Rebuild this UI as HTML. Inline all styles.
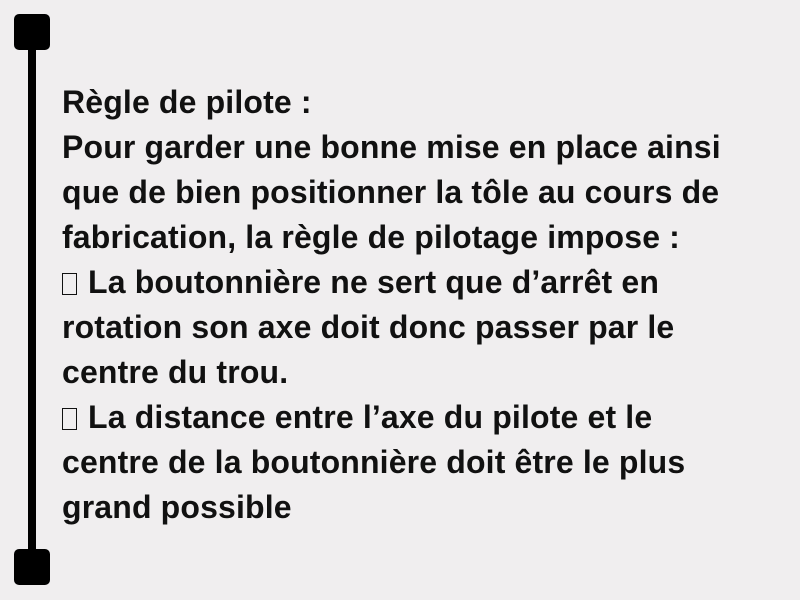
<!DOCTYPE html>
<html><head><meta charset="utf-8"><style>
html,body{margin:0;padding:0}
body{width:800px;height:600px;background:#f0eeef;position:relative;overflow:hidden}
.bar{position:absolute;left:28px;top:30px;width:8px;height:540px;background:#000}
.sq{position:absolute;left:14px;width:36px;height:36px;background:#000;border-radius:5px}
.t{position:absolute;left:62px;top:80px;font-family:"Liberation Sans",sans-serif;font-weight:bold;font-size:32px;line-height:45px;color:#111;white-space:nowrap;letter-spacing:0.15px}
.b{display:inline-block;width:15px;height:22px;border:1.5px solid #111;box-sizing:border-box;vertical-align:-2px;margin-right:2px}
</style></head><body>
<div class="bar"></div>
<div class="sq" style="top:14px"></div>
<div class="sq" style="top:549px"></div>
<div class="t">Règle de pilote :<br>
Pour garder une bonne mise en place ainsi<br>
que de bien positionner la tôle au cours de<br>
fabrication, la règle de pilotage impose :<br>
<span class="b"></span> La boutonnière ne sert que d’arrêt en<br>
rotation son axe doit donc passer par le<br>
centre du trou.<br>
<span class="b"></span> La distance entre l’axe du pilote et le<br>
centre de la boutonnière doit être le plus<br>
grand possible</div>
</body></html>
